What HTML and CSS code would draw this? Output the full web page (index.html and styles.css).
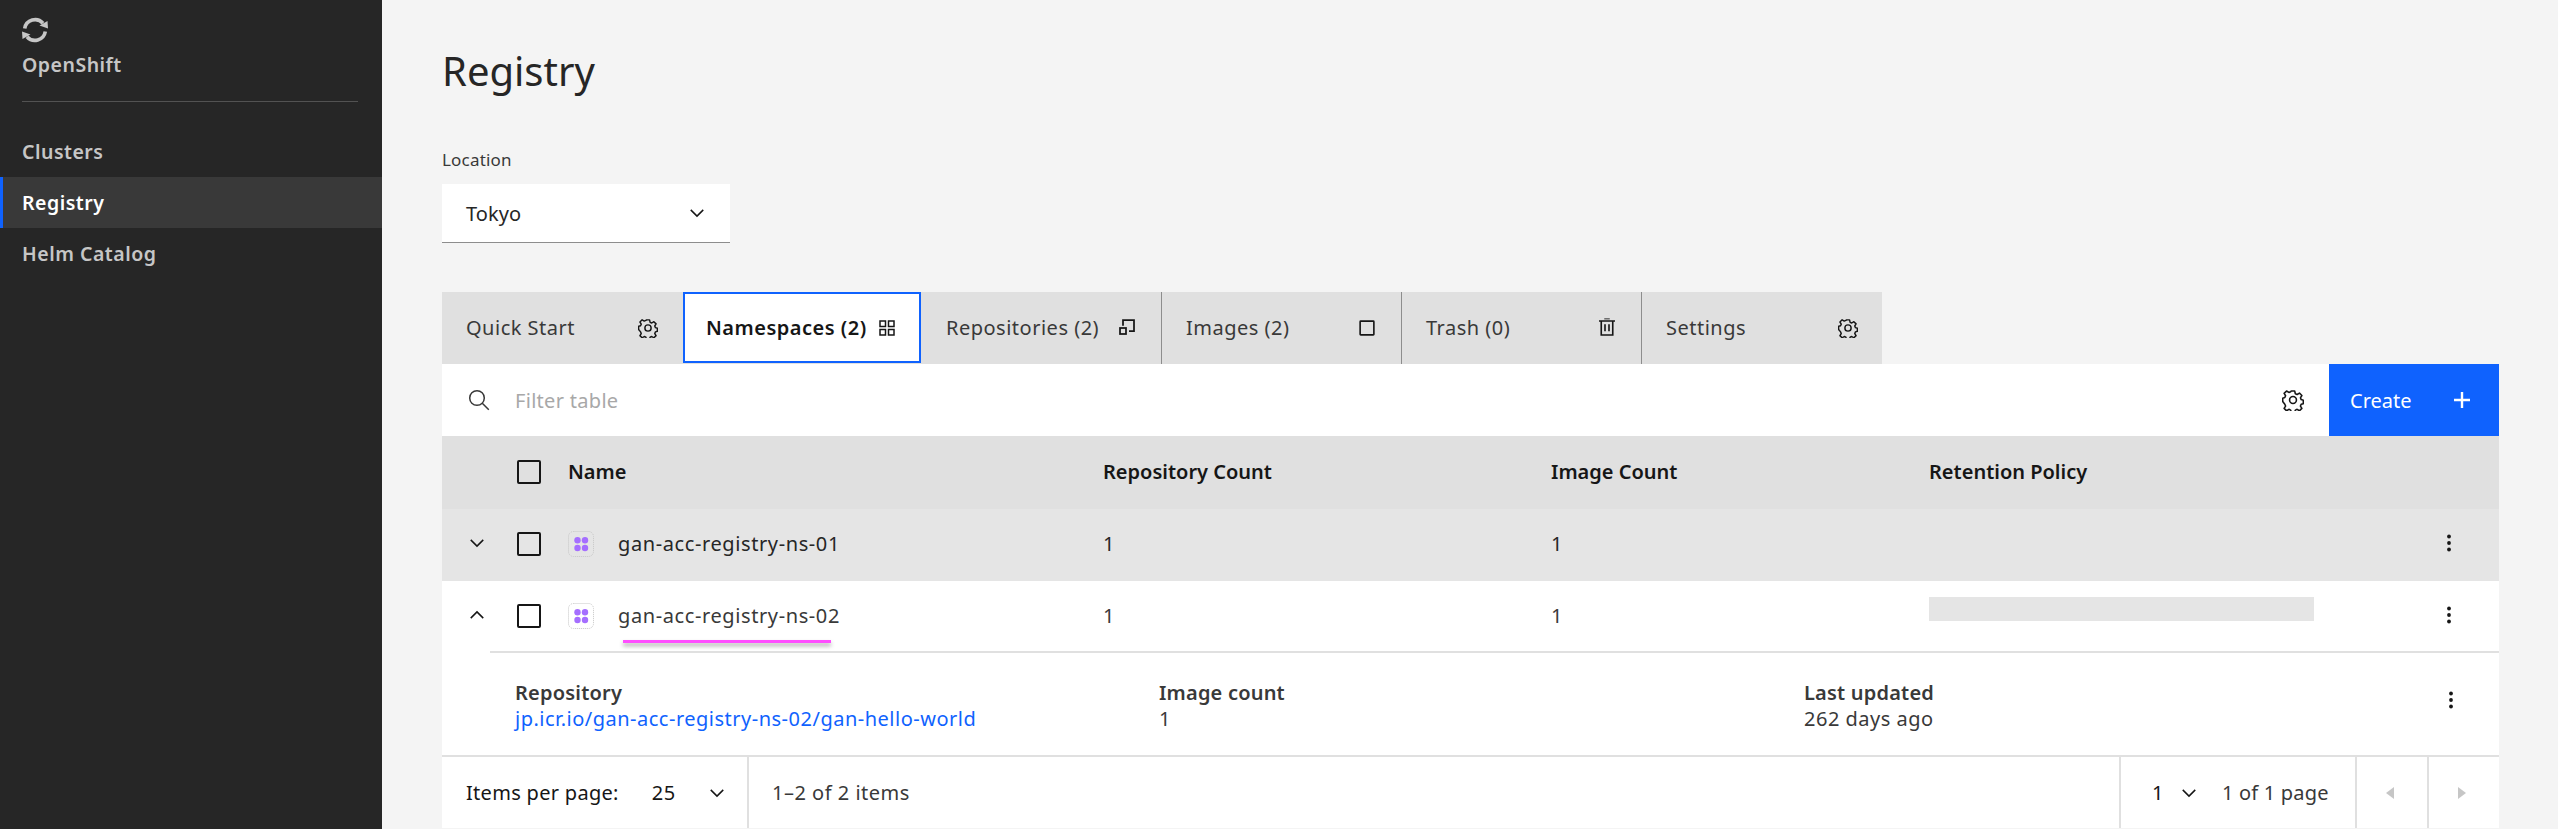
FILE: index.html
```html
<!DOCTYPE html>
<html lang="en">
<head>
    <meta charset="UTF-8">
    <meta name="viewport" content="width=device-width, initial-scale=1.0">
    <title>Registry</title>
    <link rel="stylesheet" href="styles.css">
</head>
<body>
    <svg class="sprites" width="0" height="0">
        <defs>
            <symbol id="gear" viewBox="0 0 32 32">
                <path fill="none" stroke="currentColor" stroke-width="2.3" stroke-linejoin="round" d="M13.500 3h5l.9 3.900 2.600 1.100 3.400-2.100 3.500 3.500-2.100 3.400 1.100 2.600 3.100.9v5l-3.100.9-1.100 2.600 2.100 3.400-3.500 3.500-3.400-2.100-2.600 1.100-.9 3.300h-5l-.9-3.300-2.600-1.100-3.400 2.100-3.500-3.500 2.100-3.400-1.100-2.600L1 18.300v-5l3.100-.9 1.100-2.600-2.100-3.400 3.500-3.500 3.400 2.100 2.600-1.100z"/>
                <circle cx="16" cy="16" r="5" fill="none" stroke="currentColor" stroke-width="2.3"/>
            </symbol>
            <symbol id="chevron-down" viewBox="0 0 16 16">
                <path fill="none" stroke="currentColor" stroke-width="1.2" d="M3 5.500l5 5 5-5"/>
            </symbol>
            <symbol id="kebab" viewBox="0 0 8 20">
                <circle cx="4" cy="3.500" r="1.900" fill="currentColor"/>
                <circle cx="4" cy="10" r="1.900" fill="currentColor"/>
                <circle cx="4" cy="16.500" r="1.900" fill="currentColor"/>
            </symbol>
            <symbol id="ns" viewBox="0 0 26 26">
                <rect x=".5" y=".5" width="25" height="25" rx="5" fill="none" stroke="#c6c6c6" stroke-dasharray="1 1"/>
                <circle cx="9.500" cy="9.300" r="3.200" fill="#a56eff"/>
                <circle cx="17" cy="9.300" r="3.200" fill="#a56eff"/>
                <circle cx="9.500" cy="17" r="3.200" fill="#a56eff"/>
                <circle cx="17" cy="17" r="3.200" fill="#a56eff"/>
            </symbol>
        </defs>
    </svg>

    <div class="app">
        <nav class="sidebar">
            <div class="brand">
                <svg class="brand-logo" viewBox="0 0 26 26" width="26" height="26">
                    <path fill="none" stroke="currentColor" stroke-width="3.600" d="M2.700 11.500A10.500 10.500 0 0 1 21 6.300M23.300 14.500A10.500 10.500 0 0 1 5 19.700"/>
                    <path fill="currentColor" d="M17.500 8.500l8-4.500.5 7.500zM8.500 17.500l-8 4.500-.5-7.500z"/>
                </svg>
                <div class="brand-name">OpenShift</div>
            </div>
            <ul class="side-menu">
                <li>Clusters</li>
                <li class="active">Registry</li>
                <li>Helm Catalog</li>
            </ul>
        </nav>

        <main class="content">
            <h1>Registry</h1>

            <div class="location">
                <label>Location</label>
                <div class="select-box">
                    <span>Tokyo</span>
                    <svg class="ic-chev"><use href="#chevron-down"/></svg>
                </div>
            </div>

            <div class="tabs">
                <div class="tab">
                    <span>Quick Start</span>
                    <svg class="ic-tab"><use href="#gear"/></svg>
                </div>
                <div class="tab selected">
                    <span>Namespaces (2)</span>
                    <svg class="ic-tab" viewBox="0 0 16 16">
                        <g fill="none" stroke="currentColor" stroke-width="1.2">
                            <rect x="2.400" y="2.400" width="4.400" height="4.400"/>
                            <rect x="9.200" y="2.400" width="4.400" height="4.400"/>
                            <rect x="2.400" y="9.200" width="4.400" height="4.400"/>
                            <rect x="9.200" y="9.200" width="4.400" height="4.400"/>
                        </g>
                    </svg>
                </div>
                <div class="tab">
                    <span>Repositories (2)</span>
                    <svg class="ic-tab" viewBox="0 0 16 16">
                        <g fill="none" stroke="currentColor" stroke-width="1.400">
                            <path d="M4.800 6.200V1.600h8.800v8.800H9.600"/>
                            <rect x="2.400" y="8" width="4.800" height="4.800"/>
                        </g>
                    </svg>
                </div>
                <div class="tab">
                    <span>Images (2)</span>
                    <svg class="ic-tab" viewBox="0 0 16 16">
                        <rect x="2.500" y="2.500" width="11" height="11" rx=".5" fill="none" stroke="currentColor" stroke-width="1.300"/>
                    </svg>
                </div>
                <div class="tab">
                    <span>Trash (0)</span>
                    <svg class="ic-tab" viewBox="0 0 16 16">
                        <g fill="none" stroke="currentColor" stroke-width="1.300">
                            <path d="M1.600 2.400h12.800M3.400 2.400v11.200h9.200V2.400M6.400 5v5.500M9.600 5v5.500"/>
                            <path d="M5.800 .6h4.400" stroke="#6f6f6f"/>
                        </g>
                    </svg>
                </div>
                <div class="tab">
                    <span>Settings</span>
                    <svg class="ic-tab"><use href="#gear"/></svg>
                </div>
            </div>

            <div class="panel">
                <div class="toolbar">
                    <svg class="ic-search" viewBox="0 0 22 22">
                        <circle cx="9" cy="9" r="7.300" fill="none" stroke="currentColor" stroke-width="1.500"/>
                        <path d="M14.300 14.300l6.500 6.500" fill="none" stroke="currentColor" stroke-width="1.500"/>
                    </svg>
                    <span class="filter-text">Filter table</span>
                    <svg class="ic-settings"><use href="#gear"/></svg>
                    <button class="btn-create">
                        <span>Create</span>
                        <svg viewBox="0 0 16 16" width="16" height="16"><path d="M8 0v16M0 8h16" stroke="currentColor" stroke-width="2.400"/></svg>
                    </button>
                </div>

                <div class="row head">
                    <div class="c-expand"></div>
                    <div class="c-check"><span class="checkbox"></span></div>
                    <div class="c-name">Name</div>
                    <div class="c-repo">Repository Count</div>
                    <div class="c-image">Image Count</div>
                    <div class="c-policy">Retention Policy</div>
                    <div class="c-menu"></div>
                </div>

                <div class="row hover">
                    <div class="c-expand"><svg class="ic-exp"><use href="#chevron-down"/></svg></div>
                    <div class="c-check"><span class="checkbox"></span></div>
                    <div class="c-name"><svg class="ic-ns"><use href="#ns"/></svg>gan-acc-registry-ns-01</div>
                    <div class="c-repo">1</div>
                    <div class="c-image">1</div>
                    <div class="c-policy"></div>
                    <div class="c-menu"><svg class="ic-kebab"><use href="#kebab"/></svg></div>
                </div>

                <div class="row open">
                    <div class="c-expand"><svg class="ic-exp up"><use href="#chevron-down"/></svg></div>
                    <div class="c-check"><span class="checkbox"></span></div>
                    <div class="c-name"><svg class="ic-ns"><use href="#ns"/></svg>gan-acc-registry-ns-02</div>
                    <div class="c-repo">1</div>
                    <div class="c-image">1</div>
                    <div class="c-policy"><span class="skeleton"></span></div>
                    <div class="c-menu"><svg class="ic-kebab"><use href="#kebab"/></svg></div>
                    <span class="underline"></span>
                </div>

                <div class="detail">
                    <div class="d-repo">
                        <strong>Repository</strong>
                        <a href="#">jp.icr.io/gan-acc-registry-ns-02/gan-hello-world</a>
                    </div>
                    <div class="d-count">
                        <strong>Image count</strong>
                        <span>1</span>
                    </div>
                    <div class="d-updated">
                        <strong>Last updated</strong>
                        <span>262 days ago</span>
                    </div>
                    <svg class="ic-kebab"><use href="#kebab"/></svg>
                </div>

                <div class="pager">
                    <div class="pager-left">
                        <span class="pager-label">Items per page:</span>
                        <span class="pager-val">25</span>
                        <svg class="ic-chev"><use href="#chevron-down"/></svg>
                    </div>
                    <div class="pager-range">1–2 of 2 items</div>
                    <div class="pager-pages">
                        <span class="pager-val">1</span>
                        <svg class="ic-chev"><use href="#chevron-down"/></svg>
                        <span class="pager-of">1 of 1 page</span>
                    </div>
                    <div class="pager-btn"><svg viewBox="0 0 8 12" width="8" height="12"><path d="M8 0v12L0 6z"/></svg></div>
                    <div class="pager-btn"><svg viewBox="0 0 8 12" width="8" height="12"><path d="M0 0v12l8-6z"/></svg></div>
                </div>
            </div>
        </main>
    </div>
</body>
</html>
```

FILE: styles.css
```css
* {
    box-sizing: border-box;
}
html, body {
    margin: 0;
    height: 100%;
    overflow: hidden;
}
body {
    font-family: "Noto Sans", Arial, sans-serif;
    font-size: 20px;
    letter-spacing: .5px;
    color: #262626;
    background: #f4f4f4;
}
.sprites {
    position: absolute;
}
.app {
    display: flex;
    height: 100%;
}

/* sidebar */
.sidebar {
    width: 382px;
    flex: none;
    background: #262626;
    color: #c6c6c6;
    font-weight: 600;
}
.brand {
    margin: 0 24px 0 22px;
    padding-top: 17px;
    height: 102px;
    border-bottom: 1px solid #525252;
}
.brand-logo {
    display: block;
}
.brand-name {
    margin-top: 9px;
    font-size: 19.500px;
    line-height: 26px;
}
.side-menu {
    list-style: none;
    margin: 24px 0 0;
    padding: 0;
}
.side-menu li {
    height: 51px;
    line-height: 51px;
    padding-left: 22px;
    font-size: 19.500px;
}
.side-menu li.active {
    background: #393939;
    color: #fff;
    border-left: 3px solid #0f62fe;
    padding-left: 19px;
}

/* main */
.content {
    flex: 1;
    padding: 0 60px 0 60px;
}
h1 {
    margin: 0;
    padding-top: 43px;
    height: 149px;
    font-size: 40px;
    line-height: 56px;
    font-weight: 400;
    letter-spacing: 0;
    color: #262626;
}
.location {
    width: 288px;
}
.location label {
    display: block;
    font-size: 17px;
    line-height: 22px;
    letter-spacing: .2px;
    color: #393939;
    margin-bottom: 13px;
    height: 22px;
}
.select-box {
    display: flex;
    align-items: center;
    justify-content: space-between;
    height: 59px;
    padding: 0 24px;
    background: #fff;
    border-bottom: 1px solid #8d8d8d;
    letter-spacing: .1px;
}
.select-box .ic-chev {
    margin-right: -1px;
}
.ic-chev {
    width: 20px;
    height: 20px;
    color: #161616;
}

/* tabs */
.tabs {
    display: flex;
    margin-top: 49px;
    height: 72px;
    background: #e0e0e0;
    width: 1440px;
}
.tab {
    width: 240px;
    display: flex;
    align-items: center;
    justify-content: space-between;
    padding: 0 24px;
    background: #e0e0e0;
    color: #393939;
    border-right: 1px solid #8d8d8d;
}
.tab:first-child {
    border-right: none;
}
.tab:last-child {
    border-right: none;
}
.tab span {
    padding-bottom: 1px;
}
.tab.selected {
    width: 238px;
    height: 71px;
    margin: 0 1px;
    background: #fff;
    color: #161616;
    font-weight: 600;
    letter-spacing: .5px;
    border: 2px solid #0f62fe;
    padding: 0 22px 0 21px;
}
.ic-tab {
    width: 20px;
    height: 20px;
    color: #161616;
    flex: none;
}

/* toolbar */
.panel {
    background: #fff;
}
.toolbar {
    display: flex;
    align-items: center;
    height: 72px;
    padding-left: 26px;
}
.ic-search {
    width: 22px;
    height: 22px;
    color: #393939;
}
.filter-text {
    margin-left: 25px;
    color: #a8a8a8;
    flex: 1;
    letter-spacing: .3px;
}
.ic-settings {
    width: 22px;
    height: 22px;
    margin-right: 25px;
    color: #161616;
}
.btn-create {
    width: 170px;
    height: 72px;
    display: flex;
    align-items: center;
    justify-content: space-between;
    padding: 0 29px 0 21px;
    border: none;
    background: #0f62fe;
    color: #fff;
    font: inherit;
    letter-spacing: 0;
}

/* table */
.row {
    position: relative;
    display: flex;
    align-items: center;
    height: 72px;
    padding-bottom: 2px;
    line-height: 26px;
    letter-spacing: .6px;
}
.row.head {
    height: 73px;
    background: #e0e0e0;
    color: #161616;
    font-weight: 600;
    letter-spacing: 0;
}
.row.hover {
    background: #e5e5e5;
}
.row.open {
    color: #393939;
}
.c-expand {
    width: 70px;
    display: flex;
    justify-content: center;
}
.c-check {
    width: 56px;
    padding-left: 5px;
    display: flex;
}
.c-name {
    width: 535px;
    display: flex;
    align-items: center;
}
.c-repo {
    width: 448px;
}
.c-image {
    width: 378px;
}
.c-policy {
    width: 385px;
}
.c-menu {
    flex: 1;
    display: flex;
    justify-content: center;
    padding-left: 84px;
}
.checkbox {
    width: 24px;
    height: 24px;
    border: 2px solid #161616;
    border-radius: 2px;
    display: block;
}
.ic-exp {
    width: 20px;
    height: 20px;
    color: #161616;
    margin-top: -2px;
}
.ic-exp.up {
    transform: rotate(180deg);
}
.ic-ns {
    width: 26px;
    height: 26px;
    margin-right: 24px;
    flex: none;
}
.ic-kebab {
    width: 8px;
    height: 20px;
    color: #161616;
    flex: none;
}
.c-menu .ic-kebab {
    margin-top: -2px;
}
.skeleton {
    display: block;
    width: 385px;
    height: 24px;
    margin-bottom: 14px;
    background: #e5e5e5;
}
.underline {
    position: absolute;
    left: 181px;
    top: 59px;
    width: 208px;
    height: 3px;
    background: #ff4dff;
    box-shadow: 0 3px 4px rgba(0,0,0,0.35);
}

/* expanded part */
.detail {
    position: relative;
    display: flex;
    height: 104px;
    margin-top: -2px;
    margin-left: 48px;
    padding: 27px 0 0 25px;
    border-top: 2px solid #e0e0e0;
    line-height: 26px;
    color: #393939;
}
.detail strong {
    display: block;
    font-weight: 600;
    letter-spacing: .2px;
}
.detail a {
    color: #0f62fe;
    text-decoration: none;
}
.d-repo {
    width: 644px;
}
.d-count {
    width: 645px;
}
.d-updated {
    width: 600px;
}
.detail .ic-kebab {
    position: absolute;
    right: 44px;
    top: 37px;
}

/* pagination */
.pager {
    display: flex;
    height: 73px;
    align-items: stretch;
    border-top: 2px solid #e0e0e0;
    color: #393939;
}
.pager > div {
    display: flex;
    align-items: center;
}
.pager-left {
    width: 307px;
    padding-left: 24px;
    border-right: 2px solid #e0e0e0;
    color: #161616;
}
.pager-label {
    letter-spacing: .3px;
}
.pager-left .pager-val {
    margin-left: 33px;
    margin-right: 31px;
}
.pager-range {
    width: 1370px;
    padding-left: 23px;
}
.pager-pages {
    width: 236px;
    padding-left: 31px;
    border-left: 2px solid #e0e0e0;
}
.pager-val {
    color: #161616;
}
.pager-pages .ic-chev {
    margin-left: 15px;
}
.pager-of {
    margin-left: 23px;
    letter-spacing: .2px;
}
.pager-btn {
    width: 72px;
    justify-content: center;
    padding-right: 5px;
    border-left: 2px solid #e0e0e0;
    fill: #c6c6c6;
}
```
